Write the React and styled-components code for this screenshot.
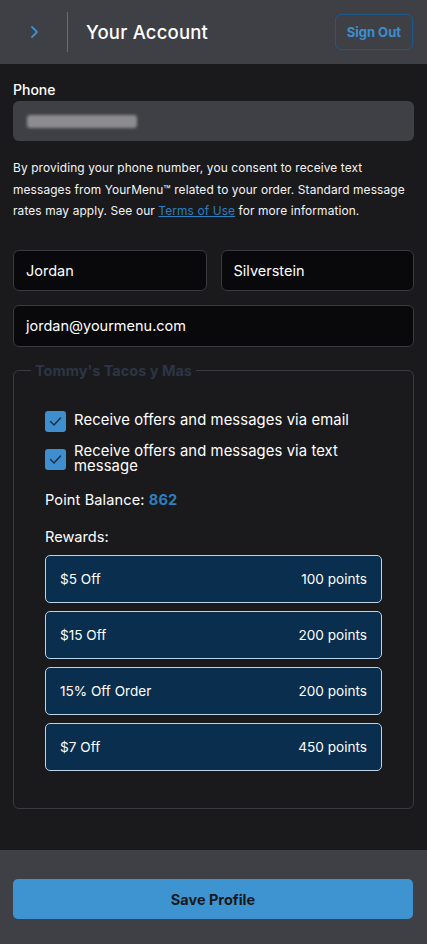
import React from "react";
import styled, { createGlobalStyle } from "styled-components";

const Global = createGlobalStyle`
  html, body { margin: 0; padding: 0; background: #1a1a1d; }
  body { font-family: Inter, "Noto Sans", sans-serif; color: #fff; -webkit-font-smoothing: antialiased; }
  * { box-sizing: border-box; }
`;

const Page = styled.div`
  width: 427px;
  min-height: 944px;
  display: flex;
  flex-direction: column;
  background: #1a1a1d;
`;

const Header = styled.header`
  height: 64px;
  background: #3f3f46;
  display: flex;
  align-items: center;
  padding: 0 14px 0 22px;
`;

const BackButton = styled.button`
  width: 24px;
  height: 24px;
  border: none;
  background: none;
  padding: 0;
  display: flex;
  align-items: center;
  justify-content: center;
  color: #3a8fd1;
`;

const Divider = styled.div`
  width: 1px;
  height: 40px;
  background: #6b6b72;
  margin: 0 18px 0 21px;
`;

const Title = styled.h1`
  margin: 0;
  flex: 1;
  font-size: 18.5px;
  font-weight: 500;
  color: #fff;
  letter-spacing: 0.2px;
`;

const SignOut = styled.button`
  height: 36px;
  padding: 0 11px;
  border: 1px solid #1c5a8c;
  border-radius: 6px;
  background: transparent;
  color: #3a8fd1;
  font-family: inherit;
  font-weight: 700;
  font-size: 13px;
`;

const Main = styled.main`
  flex: 1;
  padding: 16px 13px 41px;
  display: flex;
  flex-direction: column;
`;

const Label = styled.label`
  font-size: 14px;
  line-height: 20px;
  font-weight: 500;
  margin-bottom: 1px;
`;

const PhoneField = styled.div`
  height: 40px;
  border-radius: 6px;
  background: #3f3f46;
  display: flex;
  align-items: center;
  padding-left: 14px;
`;

const Blur = styled.span`
  width: 110px;
  height: 13px;
  background: #8c8c90;
  filter: blur(1.5px);
  border-radius: 3px;
`;

const Consent = styled.p`
  margin: 16px -6px 0 0;
  font-size: 11.9px;
  line-height: 21.5px;
  letter-spacing: 0.12px;
  color: #f4f4f5;
`;

const TermsLink = styled.a`
  color: #2a7fc0;
  text-decoration: underline;
`;

const Row = styled.div`
  display: grid;
  grid-template-columns: 1fr 1fr;
  gap: 14px;
  margin-top: ${p => p.$top || 0}px;
`;

const Input = styled.div`
  height: ${p => p.$h || 41}px;
  border: 1px solid #3a3a40;
  border-radius: 6px;
  background: #09090b;
  display: flex;
  align-items: center;
  padding-left: 12px;
  font-size: 14.5px;
  color: #fff;
  margin-top: ${p => p.$top || 0}px;
`;

const Fieldset = styled.fieldset`
  margin: 14px 0 0;
  border: 1px solid #3a3a40;
  border-radius: 6px;
  padding: 0 31px 37px;
  min-width: 0;
`;

const Legend = styled.legend`
  margin-left: -14px;
  padding: 0 4px;
  font-size: 14.5px;
  line-height: 20px;
  font-weight: 700;
  color: #2d3545;
`;

const CheckList = styled.div`
  display: flex;
  flex-direction: column;
  gap: 12px;
  margin-top: 30px;
`;

const CheckRow = styled.div`
  display: flex;
  align-items: center;
  gap: 8px;
`;

const Box = styled.span`
  flex: none;
  width: 21px;
  height: 21px;
  border-radius: 3px;
  background: #3d8fd0;
  display: flex;
  align-items: center;
  justify-content: center;
`;

const CheckText = styled.span`
  font-size: 14.8px;
  line-height: 15.5px;
  letter-spacing: 0.1px;
  color: #fff;
`;

const Balance = styled.div`
  margin-top: 15px;
  font-size: 14.6px;
  line-height: 20px;
  letter-spacing: 0.1px;
`;

const Points = styled.span`
  color: #2d7fc0;
  font-weight: 700;
`;

const RewardsLabel = styled.div`
  margin-top: 17px;
  font-size: 14.6px;
  line-height: 20px;
`;

const RewardList = styled.div`
  margin-top: 8px;
  display: flex;
  flex-direction: column;
  gap: 8px;
`;

const Reward = styled.div`
  height: 48px;
  border: 1px solid #bcd3e8;
  border-radius: 5px;
  background: #0a2e4e;
  display: flex;
  align-items: center;
  justify-content: space-between;
  padding: 0 14px;
  font-size: 13.6px;
  color: #fff;
`;

const Footer = styled.footer`
  height: 94px;
  background: #3f3f46;
  padding: 29px 14px 0 13px;
`;

const SaveButton = styled.button`
  width: 100%;
  height: 40px;
  border: none;
  border-radius: 5px;
  background: #3d94d0;
  color: #18181b;
  font-family: inherit;
  font-weight: 700;
  font-size: 14.5px;
`;

const Check = () => (
  <svg width="13" height="11" viewBox="0 0 13 11" fill="none">
    <path d="M1.5 5.5 L5 9 L11.5 2" stroke="#1d2b3a" strokeWidth="1.4" strokeLinecap="round" strokeLinejoin="round" />
  </svg>
);

const rewards = [
  ["$5 Off", "100 points"],
  ["$15 Off", "200 points"],
  ["15% Off Order", "200 points"],
  ["$7 Off", "450 points"],
];

export default function App() {
  return (
    <Page>
      <Global />
      <Header>
        <BackButton aria-label="Back">
          <svg width="10" height="14" viewBox="0 0 10 14" fill="none">
            <path d="M3 2 L8 7 L3 12" stroke="#3a8fd1" strokeWidth="1.8" strokeLinecap="round" strokeLinejoin="round" />
          </svg>
        </BackButton>
        <Divider />
        <Title>Your Account</Title>
        <SignOut>Sign Out</SignOut>
      </Header>
      <Main>
        <Label>Phone</Label>
        <PhoneField>
          <Blur />
        </PhoneField>
        <Consent>
          By providing your phone number, you consent to receive text messages from YourMenu™ related to your order. Standard message rates may apply. See our <TermsLink href="#">Terms of Use</TermsLink> for more information.
        </Consent>
        <Row $top={28}>
          <Input>Jordan</Input>
          <Input>Silverstein</Input>
        </Row>
        <Input $top={14} $h={42}>jordan@yourmenu.com</Input>
        <Fieldset>
          <Legend>Tommy's Tacos y Mas</Legend>
          <CheckList>
            <CheckRow>
              <Box><Check /></Box>
              <CheckText>Receive offers and messages via email</CheckText>
            </CheckRow>
            <CheckRow>
              <Box><Check /></Box>
              <CheckText>Receive offers and messages via text message</CheckText>
            </CheckRow>
          </CheckList>
          <Balance>Point Balance: <Points>862</Points></Balance>
          <RewardsLabel>Rewards:</RewardsLabel>
          <RewardList>
            {rewards.map(([name, pts]) => (
              <Reward key={name}>
                <span>{name}</span>
                <span>{pts}</span>
              </Reward>
            ))}
          </RewardList>
        </Fieldset>
      </Main>
      <Footer>
        <SaveButton>Save Profile</SaveButton>
      </Footer>
    </Page>
  );
}
